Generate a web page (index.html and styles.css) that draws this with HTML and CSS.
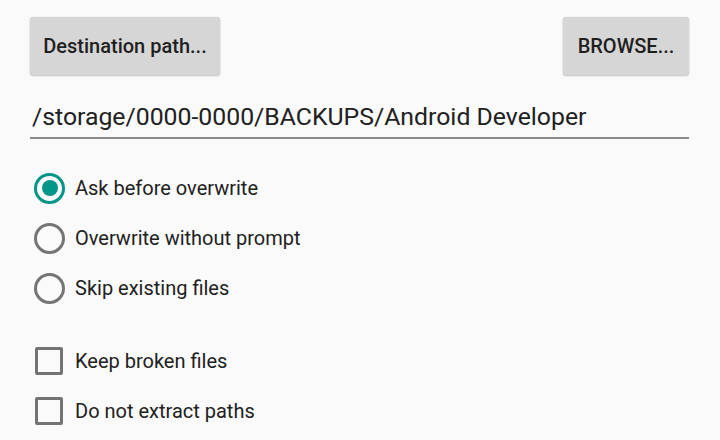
FILE: index.html
```html
<!DOCTYPE html>
<html>
<head>
<meta charset="utf-8">
<link rel="stylesheet" href="styles.css">
</head>
<body>
<div class="page">
  <div class="top-row">
    <div class="btn btn-dest">Destination path...</div>
    <div class="btn btn-browse">BROWSE...</div>
  </div>
  <div class="path-field">/storage/0000-0000/BACKUPS/Android Developer</div>
  <div class="radio-group">
    <div class="row"><span class="radio checked"><span class="dot"></span></span><span class="label">Ask before overwrite</span></div>
    <div class="row"><span class="radio"></span><span class="label">Overwrite without prompt</span></div>
    <div class="row"><span class="radio"></span><span class="label">Skip existing files</span></div>
  </div>
  <div class="check-group">
    <div class="row"><span class="check"></span><span class="label">Keep broken files</span></div>
    <div class="row"><span class="check"></span><span class="label">Do not extract paths</span></div>
  </div>
</div>
</body>
</html>
```
FILE: styles.css
```css
html, body {
  margin: 0;
  padding: 0;
  background: #fafafa;
  width: 720px;
  height: 440px;
  overflow: hidden;
  font-family: Roboto, "Liberation Sans", sans-serif;
  color: #212121;
}
.page {
  padding: 17px 31px 0 30px;
}
.top-row {
  display: flex;
  justify-content: space-between;
}
.btn {
  height: 58px;
  display: flex;
  align-items: center;
  justify-content: center;
  background: #d6d6d6;
  border-radius: 3px;
  box-shadow: 0 1px 2px rgba(0,0,0,0.22), 0 0 1px rgba(0,0,0,0.12);
  font-weight: 500;
  font-size: 20px;
  color: #1f1f1f;
}
.btn-dest { width: 190px; }
.btn-browse { width: 126px; }
.path-field {
  margin-top: 26px;
  font-size: 24.8px;
  line-height: 32px;
  padding: 0 0 4px 2px;
  border-bottom: 2px solid #8a8a8a;
  color: #212121;
}
.radio-group {
  margin-top: 24px;
}
.row {
  height: 50px;
  display: flex;
  align-items: center;
}
.label {
  font-size: 20px;
  margin-left: 10px;
}
.radio {
  width: 31px;
  height: 31px;
  box-sizing: border-box;
  border: 3px solid #757575;
  border-radius: 50%;
  margin-left: 4px;
  display: flex;
  align-items: center;
  justify-content: center;
}
.radio.checked {
  border-color: #009688;
}
.dot {
  width: 16px;
  height: 16px;
  border-radius: 50%;
  background: #009688;
}
.check-group {
  margin-top: 23px;
}
.check {
  width: 28px;
  height: 28px;
  box-sizing: border-box;
  border: 3px solid #737373;
  border-radius: 2px;
  margin-left: 5px;
  margin-right: 2px;
}
```
